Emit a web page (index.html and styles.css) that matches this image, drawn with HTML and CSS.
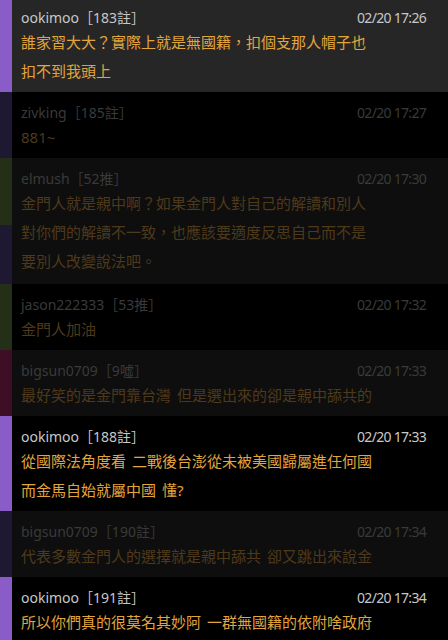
FILE: index.html
```html
<!DOCTYPE html>
<html lang="zh-Hant">
<head>
    <meta charset="UTF-8">
    <meta name="viewport" content="width=device-width, initial-scale=1.0">
    <title>推文</title>
    <link rel="stylesheet" href="styles.css">
</head>
<body>

<div class="thread">
    <!-- 目前選取的推文 -->
    <div class="post selected">
        <div class="bar"><span class="seg author"></span></div>
        <div class="content">
            <div class="meta"><span class="user">ookimoo［183註］</span><span class="time">02/20 17:26</span></div>
            <div class="line">誰家習大大？實際上就是無國籍，扣個支那人帽子也</div>
            <div class="line">扣不到我頭上</div>
        </div>
    </div>

    <div class="post dim">
        <div class="bar"><span class="seg note"></span></div>
        <div class="content">
            <div class="meta"><span class="user">zivking［185註］</span><span class="time">02/20 17:27</span></div>
            <div class="line">881~</div>
        </div>
    </div>

    <div class="post dim shade tall">
        <div class="bar">
            <span class="seg push grow-68"></span>
            <span class="seg note grow-60"></span>
        </div>
        <div class="content">
            <div class="meta"><span class="user">elmush［52推］</span><span class="time">02/20 17:30</span></div>
            <div class="line">金門人就是親中啊？如果金門人對自己的解讀和別人</div>
            <div class="line">對你們的解讀不一致，也應該要適度反思自己而不是</div>
            <div class="line">要別人改變說法吧。</div>
        </div>
    </div>

    <div class="post dim">
        <div class="bar"><span class="seg push"></span></div>
        <div class="content">
            <div class="meta"><span class="user">jason222333［53推］</span><span class="time">02/20 17:32</span></div>
            <div class="line">金門人加油</div>
        </div>
    </div>

    <div class="post dim shade">
        <div class="bar"><span class="seg boo"></span></div>
        <div class="content">
            <div class="meta"><span class="user">bigsun0709［9噓］</span><span class="time">02/20 17:33</span></div>
            <div class="line">最好笑的是金門靠台灣 但是選出來的卻是親中舔共的</div>
        </div>
    </div>

    <div class="post">
        <div class="bar"><span class="seg author"></span></div>
        <div class="content">
            <div class="meta"><span class="user">ookimoo［188註］</span><span class="time">02/20 17:33</span></div>
            <div class="line">從國際法角度看 二戰後台澎從未被美國歸屬進任何國</div>
            <div class="line">而金馬自始就屬中國 懂?</div>
        </div>
    </div>

    <div class="post dim shade">
        <div class="bar"><span class="seg note"></span></div>
        <div class="content">
            <div class="meta"><span class="user">bigsun0709［190註］</span><span class="time">02/20 17:34</span></div>
            <div class="line">代表多數金門人的選擇就是親中舔共 卻又跳出來說金</div>
        </div>
    </div>

    <div class="post">
        <div class="bar"><span class="seg author"></span></div>
        <div class="content">
            <div class="meta"><span class="user">ookimoo［191註］</span><span class="time">02/20 17:34</span></div>
            <div class="line">所以你們真的很莫名其妙阿 一群無國籍的依附啥政府</div>
        </div>
    </div>
</div>

</body>
</html>
```

FILE: styles.css
```css
html, body {
    margin: 0;
    padding: 0;
    background-color: #000;
    height: 100%;
    overflow: hidden;
}
body {
    font-family: "Noto Sans", "Noto Sans CJK TC", sans-serif;
}
.thread {
    margin-top: -3px;
}
.post {
    display: flex;
    background-color: #000;
}
.post.selected {
    background-color: #262626;
}
.post.shade {
    background-color: #0e0e0e;
}
.bar {
    width: 12px;
    flex-shrink: 0;
    display: flex;
    flex-direction: column;
}
.seg {
    flex: 1;
}
.seg.grow-68 {
    flex: 68;
}
.seg.grow-60 {
    flex: 60;
}
.seg.author {
    background-color: #8a5cc8;
}
.seg.note {
    background-color: #1f1832;
}
.seg.push {
    background-color: #242f17;
}
.seg.boo {
    background-color: #3e0e27;
}
.content {
    flex: 1;
    padding: 11px 22px 6px 9px;
}
.post.tall .content {
    padding-bottom: 8px;
}
.meta {
    display: flex;
    justify-content: space-between;
    height: 20px;
    line-height: 20px;
    font-size: 14px;
    color: #c8c8c8;
}
.meta .time {
    letter-spacing: -0.7px;
}
.line {
    height: 29px;
    line-height: 29px;
    font-size: 15px;
    word-spacing: 2px;
    color: #e2a53c;
    white-space: nowrap;
}
.post.dim .meta {
    color: #3a3a3a;
}
.post.dim .line {
    color: #4e3a1b;
}
```
